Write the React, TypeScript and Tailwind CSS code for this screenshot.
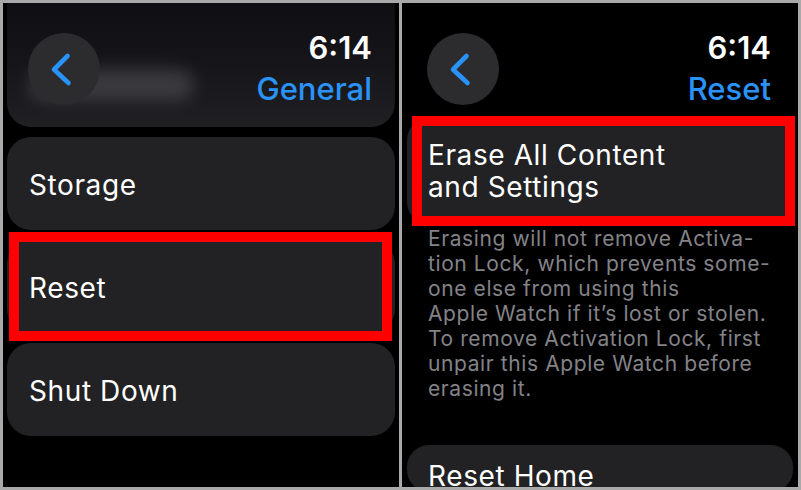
import type { ReactNode } from "react"

const font = { fontFamily: "Inter, 'Noto Sans', sans-serif" }

function BackButton() {
  return (
    <div className="w-[72px] h-[72px] rounded-full bg-[#2c2c2f] flex items-center justify-center relative">
      <svg width="72" height="72" viewBox="0 0 72 72" className="absolute inset-0">
        <path d="M39.5 23 L26 36.5 L40.5 50" fill="none" stroke="#2a93f8" strokeWidth="4.6" strokeLinecap="round" strokeLinejoin="round" />
      </svg>
    </div>
  )
}

function Header({ title }: { title: string }) {
  return (
    <div className="relative flex items-start justify-between pl-[25px] pr-[27px] pt-[30px]">
      <BackButton />
      <div className="flex flex-col items-end -mt-[1px]">
        <div className="text-[31px] leading-[32px] font-semibold text-white">6:14</div>
        <div className="mt-[9px] text-[31px] leading-[32px] font-medium text-[#2a93f8]">{title}</div>
      </div>
    </div>
  )
}

function Row({ label, marked = false }: { label: string; marked?: boolean }) {
  return (
    <div className="relative h-[93px] mx-[4px] rounded-[24px] bg-[#222224] flex items-center px-[22px] pt-[3px]">
      {marked && <div className="absolute left-[2px] right-[3px] -top-[8px] -bottom-[8px] border-[10px] border-[#ff0000] bg-[#222224]" />}
      <span className="relative text-[28px] text-white tracking-[0.6px]">{label}</span>
    </div>
  )
}

function Panel({ children }: { children: ReactNode }) {
  return <div className="w-[396px] h-[484px] bg-black overflow-hidden flex flex-col">{children}</div>
}

const footer = [
  "Erasing will not remove Activa-",
  "tion Lock, which prevents some-",
  "one else from using this",
  "Apple Watch if it\u2019s lost or stolen.",
  "To remove Activation Lock, first",
  "unpair this Apple Watch before",
  "erasing it.",
]

export default function App() {
  return (
    <div className="w-[801px] h-[490px] bg-[#a9a9a9] p-[3px] flex gap-[3px]" style={font}>
      {/* General list */}
      <Panel>
        <div className="relative h-[124px] mx-[4px] rounded-b-[24px] bg-gradient-to-b from-[#0f0f13] via-[#16161a] to-[#202023]">
          <div className="absolute left-[22px] top-[66px] w-[165px] h-[32px] rounded-full bg-[#505054] opacity-60 blur-[8px]" />
          <div className="-mx-[4px]">
            <Header title="General" />
          </div>
        </div>
        <div className="mt-[10px] flex flex-col gap-[10px]">
          <Row label="Storage" />
          <Row label="Reset" marked />
          <Row label="Shut Down" />
        </div>
      </Panel>

      {/* Reset screen */}
      <Panel>
        <Header title="Reset" />
        <div className="relative mt-[13px] ml-[5px] mr-[5px] rounded-[22px] bg-[#222224] px-[21px] py-[21px]">
          <div className="absolute left-[5px] -right-[2px] -top-[2px] -bottom-[2px] border-[10px] border-[#ff0000] bg-[#222224]" />
          <div className="relative text-[28px] leading-[32px] text-white tracking-[0.6px]">
            Erase All Content
            <br />
            and Settings
          </div>
        </div>
        <div className="mt-[2px] pl-[26px] text-[21px] leading-[25px] text-[#838388] tracking-[0.6px] whitespace-nowrap">
          {footer.map((line) => (
            <div key={line}>{line}</div>
          ))}
        </div>
        <div className="mt-[44px] mx-[5px] rounded-[22px] bg-[#222224] px-[21px] pt-[15px] h-[80px]">
          <div className="text-[28px] leading-[32px] text-white tracking-[0.6px]">Reset Home</div>
        </div>
      </Panel>
    </div>
  )
}
